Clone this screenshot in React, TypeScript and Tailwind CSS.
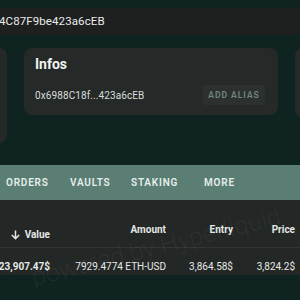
export default function App() {
  return (
    <div
      className="relative h-[300px] w-[300px] overflow-hidden bg-[#0f2420] text-white"
      style={{ fontFamily: 'Roboto, "Noto Sans", sans-serif' }}
    >
      <div className="pt-[8px]">
        <div className="flex h-[27px] items-center bg-[#1e1f1f]">
          <span className="-ml-[1px] whitespace-nowrap text-[11.5px] tracking-[0.1px] text-[#e8ecea]">
            4C87F9be423a6cEB
          </span>
        </div>
      </div>

      <div className="mt-[13px] flex items-start gap-[17px]">
        <div className="-ml-[33px] h-[95px] w-[40px] shrink-0 rounded-[8px] bg-[#252928]" />
        <div className="h-[67px] w-[254px] shrink-0 rounded-[8px] bg-[#252928] pl-[11px] pr-[13px] pt-[6px]">
          <div className="text-[14px] font-bold leading-[20px] text-[#f2f4f3]">Infos</div>
          <div className="mt-[11px] flex items-center justify-between">
            <span className="text-[10px] tracking-[0.1px] text-[#d9dedc]">0x6988C18f...423a6cEB</span>
            <button
              type="button"
              className="h-[20px] w-[62px] rounded-[3px] bg-[#2c312f] text-[8.5px] font-semibold tracking-[1px] text-[#74877f]"
            >
              ADD ALIAS
            </button>
          </div>
        </div>
        <div className="h-[70px] w-[40px] shrink-0 rounded-[8px] bg-[#252928]" />
      </div>

      <div className="mt-[22px] flex h-[35px] items-center bg-[#5a7d74] pl-[6px] text-[10px] font-semibold tracking-[0.8px] text-[#e6eeeb]">
        <span className="w-[64px]">ORDERS</span>
        <span className="w-[61px]">VAULTS</span>
        <span className="w-[73px]">STAKING</span>
        <span>MORE</span>
      </div>

      <div className="h-[75px] bg-[#232726] pt-[22px] text-[10px]">
        <div className="grid h-[26px] grid-cols-[50px_116px_67px_62px] border-b border-[#313635] font-bold leading-[16px] text-[#e4e7e6]">
          <span className="flex items-center justify-end gap-[4px]">
            <svg width="11" height="11" viewBox="0 0 12 12" fill="none" stroke="currentColor" strokeWidth="1.6">
              <path d="M6 1.5v9M2 6.5l4 4 4-4" />
            </svg>
            Value
          </span>
          <span className="text-right">Amount</span>
          <span className="text-right">Entry</span>
          <span className="text-right">Price</span>
        </div>
        <div className="grid grid-cols-[50px_116px_67px_62px] pt-[11px] leading-[16px] text-[#e6e9e8]">
          <span className="flex justify-end overflow-visible whitespace-nowrap font-bold">
            <span className="shrink-0">23,907.47$</span>
          </span>
          <span className="text-right">7929.4774 ETH-USD</span>
          <span className="text-right">3,864.58$</span>
          <span className="text-right">3,824.2$</span>
        </div>
      </div>

      <div className="pointer-events-none absolute left-[32px] top-[262px] origin-left -rotate-[14deg] whitespace-nowrap text-[25px] font-light leading-[32px] text-white/[0.06]">
        powered by Hyperliquid
      </div>
    </div>
  );
}
